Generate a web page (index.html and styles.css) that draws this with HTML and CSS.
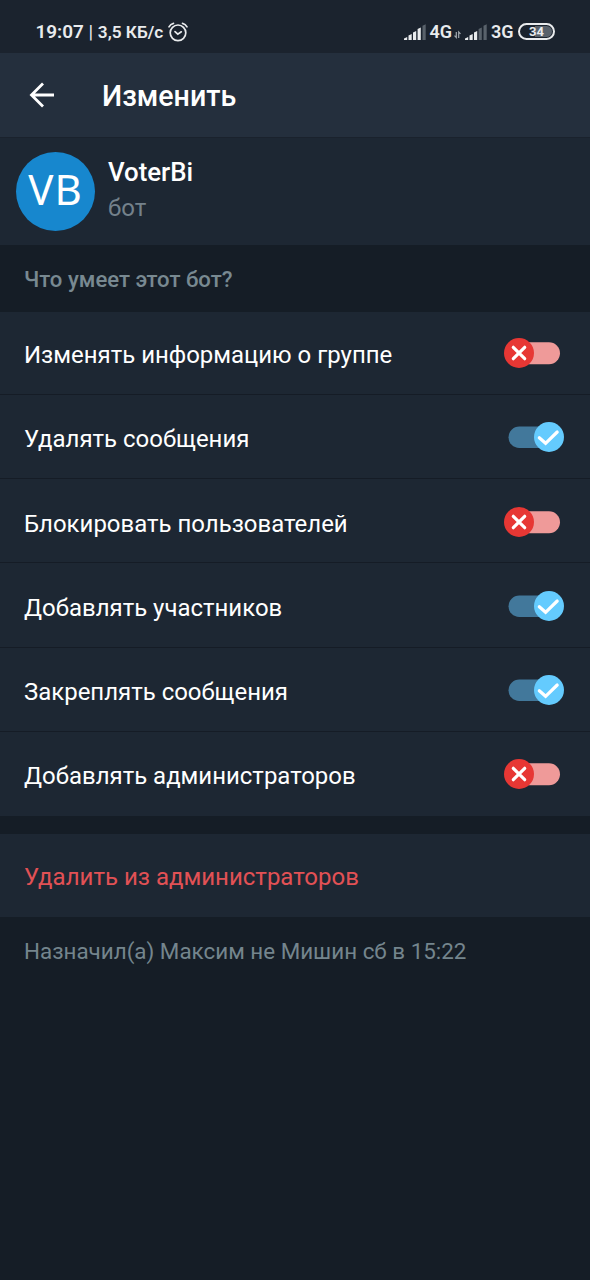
FILE: index.html
```html
<!DOCTYPE html>
<html lang="ru">
<head>
<meta charset="utf-8">
<title>Изменить</title>
<link rel="stylesheet" href="styles.css">
</head>
<body>
<svg class="defs" width="0" height="0">
  <symbol id="off" viewBox="0 0 60 30">
    <rect x="5" y="4.300" width="51" height="22" rx="11" fill="#ef9a99"/>
    <circle cx="15" cy="15" r="15" fill="#e73734"/>
    <path d="M9.300 9.300 20.700 20.700M20.700 9.300 9.300 20.700" stroke="#fff" stroke-width="3.200" stroke-linecap="round"/>
  </symbol>
  <symbol id="on" viewBox="0 0 60 30">
    <rect x="4.500" y="4.500" width="50" height="21.500" rx="10.750" fill="#42789b"/>
    <circle cx="45" cy="15" r="15" fill="#64cbfe"/>
    <path d="M35.300 15.800 41.600 21.300 53.200 10" fill="none" stroke="#fff" stroke-width="3.200" stroke-linecap="round"/>
  </symbol>
  <symbol id="signal" viewBox="0 0 22 16">
    <path d="M0 16v-1.500l3.200-1.500V16zM4.500 16v-4.500l3.200-1.500v6zM9 16V8.500l3.200-1.500v9zM13.600 16V5l3.200-1.500V16z" fill="#e9ebed"/>
    <path d="M18.500 16V1.800L21.700 .3V16z" fill="#59626b"/>
  </symbol>
  <symbol id="signal-weak" viewBox="0 0 22 16">
    <path d="M0 16v-1.500l3.200-1.500V16zM4.500 16v-4.500l3.200-1.500v6zM9 16V8.500l3.200-1.500v9z" fill="#e9ebed"/>
    <path d="M13.600 16V5l3.200-1.500V16zM18.500 16V1.800L21.700 .3V16z" fill="#59626b"/>
  </symbol>
</svg>

<div class="status">
  <span class="time">19:07 <span class="bar">|</span> <span class="rate">3,5 КБ/с</span></span>
  <svg class="alarm" viewBox="0 0 20 20" fill="none" stroke="#e9ebed" stroke-width="1.700" stroke-linecap="round">
    <circle cx="10" cy="10.800" r="7.800"/>
    <path d="M1 4.800Q2.500 2 5.500 1.300M19 4.800Q17.500 2 14.500 1.300M7 9.600 9.800 12.200 13.300 9.800"/>
  </svg>
  <div class="right">
    <svg class="signal"><use href="#signal"/></svg>
    <span class="net">4G</span>
    <svg class="arrows" viewBox="0 0 7 8" fill="none" stroke="#a3a9af" stroke-width="1.200"><path d="M2.300 1v5.500L.5 4.700M4.700 7V1l1.800 1.800"/></svg>
    <svg class="signal"><use href="#signal-weak"/></svg>
    <span class="net">3G</span>
    <span class="battery">34</span>
  </div>
</div>

<header class="header">
  <svg class="back" viewBox="0 0 26 26" fill="none" stroke="#fff" stroke-width="2.800"><path d="M25 13H3M14 1.500 2.500 13 14 24.500"/></svg>
  <h1 class="title">Изменить</h1>
</header>

<section class="profile">
  <div class="avatar"><span class="initials">VB</span></div>
  <div class="who">
    <div class="name">VoterBi</div>
    <div class="kind">бот</div>
  </div>
</section>

<h2 class="caption">Что умеет этот бот?</h2>

<div class="list">
  <div class="row"><span class="label">Изменять информацию о группе</span><svg class="switch"><use href="#off"/></svg></div>
  <div class="row"><span class="label">Удалять сообщения</span><svg class="switch"><use href="#on"/></svg></div>
  <div class="row"><span class="label">Блокировать пользователей</span><svg class="switch"><use href="#off"/></svg></div>
  <div class="row"><span class="label">Добавлять участников</span><svg class="switch"><use href="#on"/></svg></div>
  <div class="row"><span class="label">Закреплять сообщения</span><svg class="switch"><use href="#on"/></svg></div>
  <div class="row"><span class="label">Добавлять администраторов</span><svg class="switch"><use href="#off"/></svg></div>
</div>

<div class="remove"><span>Удалить из администраторов</span></div>
<p class="note"><span>Назначил(а) Максим не Мишин сб в 15:22</span></p>
</body>
</html>
```
FILE: styles.css
```css
* { box-sizing: border-box; }
body {
  margin: 0;
  min-height: 1280px;
  background: #151d26;
  color: #fff;
  font-family: Roboto, "Noto Sans", sans-serif;
  white-space: nowrap;
}
svg { display: block; flex: none; overflow: visible; }
.defs { position: absolute; }
.status {
  height: 53px;
  padding: 10px 35px 0 35.500px;
  display: flex;
  align-items: center;
  background: #1b232e;
  color: #e9ebed;
  font-weight: 600;
  font-size: 18.900px;
}
.rate { font-size: 17.200px; }
.bar { font-weight: 400; }
.alarm { width: 20px; height: 20px; margin-left: 5px; }
.right { margin-left: auto; display: flex; align-items: center; }
.signal { width: 22px; height: 16px; }
.net { width: 22px; margin-left: 4px; font-size: 18px; }
.arrows { width: 7px; height: 8px; margin: 6px 4px 0 2.500px; }
.battery {
  width: 37px;
  height: 17px;
  margin-left: 5px;
  border: 2px solid #e9ebed;
  border-radius: 9px;
  background: linear-gradient(90deg, #1b232e 45%, #58616b 45%);
  background-clip: content-box;
  padding: 1px;
  font-size: 13px;
  font-weight: 700;
  line-height: 12px;
  text-align: center;
}
.header {
  height: 84px;
  padding-left: 29px;
  display: flex;
  align-items: center;
  background: #242f3d;
}
.back { width: 26px; height: 26px; }
.title { margin: 2px 0 0 47px; font-size: 28.600px; font-weight: 500; }
.profile {
  height: 108px;
  padding: 14px 16px;
  display: flex;
  background: #1d2733;
  border-top: 1px solid #1a222d;
}
.avatar {
  width: 79px;
  height: 79px;
  border-radius: 50%;
  background: #1787ce;
  display: flex;
  justify-content: center;
  align-items: center;
  padding-bottom: 7px;
  font: 42px "Noto Sans", "Open Sans", sans-serif;
  letter-spacing: 1px;
}
.who { margin-left: 13px; padding-top: 3px; }
.name { font-size: 25.800px; font-weight: 500; line-height: 34px; }
.kind { font-size: 24px; line-height: 38px; color: #74818b; }
.caption {
  margin: 0;
  height: 67px;
  padding: 1px 24px 0;
  display: flex;
  align-items: center;
  font-size: 22.150px;
  font-weight: 500;
  color: #788991;
}
.list, .remove { background: #1d2733; }
.row {
  height: 84.200px;
  padding: 0 26px 0 24px;
  display: flex;
  align-items: center;
  justify-content: space-between;
  border-bottom: 1px solid #151c26;
}
.row:first-child { height: 83px; }
.row:last-child { border-bottom-color: #1d2733; }
.label { margin-top: 4px; font-size: 23.960px; }
.switch { width: 60px; height: 30px; }
.row:nth-child(n+3) { padding-top: 1.500px; }
.remove {
  height: 83px;
  margin-top: 18px;
  padding: 4px 24px 0;
  display: flex;
  align-items: center;
  font-size: 24px;
  color: #e25155;
}
.note {
  margin: 0;
  padding: 20px 24px;
  font-size: 22.400px;
  line-height: 28px;
  color: #74858d;
}
```
